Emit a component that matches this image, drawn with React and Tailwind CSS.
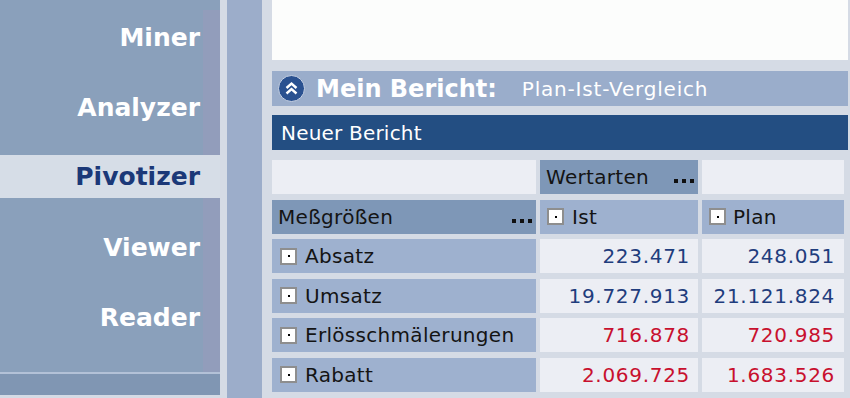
import React from "react";

const F = { fontFamily: '"DejaVu Sans", Verdana, sans-serif' };

function Box() {
  return (
    <span className="w-[17px] h-[17px] border-2 border-[#8e8e8e] bg-white flex items-center justify-center shrink-0">
      <span className="w-[2px] h-[2px] bg-black" />
    </span>
  );
}

function Dots() {
  return (
    <span className="flex gap-[4px] items-end">
      <span className="w-[4px] h-[4px] bg-[#111]" />
      <span className="w-[4px] h-[4px] bg-[#111]" />
      <span className="w-[4px] h-[4px] bg-[#111]" />
    </span>
  );
}

const rows = [
  ["Absatz", "223.471", "248.051", "text-[#1f3d7d]"],
  ["Umsatz", "19.727.913", "21.121.824", "text-[#1f3d7d]"],
  ["Erlösschmälerungen", "716.878", "720.985", "text-[#c8102e]"],
  ["Rabatt", "2.069.725", "1.683.526", "text-[#c8102e]"],
];

function SideItem({ label }) {
  return (
    <div className="h-[28px] flex items-center justify-end pr-[3px] text-white font-bold text-[25px] leading-none">
      {label}
    </div>
  );
}

export default function App() {
  return (
    <div
      className="w-[850px] h-[398px] bg-[#d5dbe5] flex overflow-hidden"
      style={F}
    >
      {/* Sidebar */}
      <div className="w-[220px] h-full flex flex-col">
        <div className="h-[10px] bg-[#8aa0bb]" />
        <div className="h-[145px] flex">
          <div className="w-[203px] bg-[#8aa0bb] flex flex-col pt-[13px] gap-[42px]">
            <SideItem label="Miner" />
            <SideItem label="Analyzer" />
          </div>
          <div className="w-[17px] bg-[#929dbb]" />
        </div>
        <div className="h-[43px] bg-[#d6dde7] flex items-center justify-end pr-[20px] text-[#1b3878] font-bold text-[25px] leading-none">
          Pivotizer
        </div>
        <div className="h-[174px] flex">
          <div className="w-[203px] bg-[#8aa0bb] flex flex-col pt-[35px] gap-[42px]">
            <SideItem label="Viewer" />
            <SideItem label="Reader" />
          </div>
          <div className="w-[17px] bg-[#929dbb]" />
        </div>
        <div className="h-[2px] bg-[#b3c1d7]" />
        <div className="h-[21px] bg-[#8096b3]" />
      </div>

      <div className="w-[7px]" />
      <div className="w-[35px] h-full bg-[#9cadca]" />
      <div className="w-[10px]" />

      {/* Main */}
      <div className="w-[576px] flex flex-col">
        <div className="h-[60px] bg-[#fcfdfc]" />
        <div className="h-[11px]" />
        <div className="h-[35px] bg-[#9aadcb] flex items-center">
          <span className="ml-[6px] w-[27px] h-[27px] rounded-full bg-[#2a5190] border border-[#c9d3e4] flex items-center justify-center">
            <svg width="15" height="15" viewBox="0 0 15 15">
              <path d="M2.5 7 L7.5 2.5 L12.5 7" fill="none" stroke="white" strokeWidth="2.4" />
              <path d="M2.5 12.5 L7.5 8 L12.5 12.5" fill="none" stroke="white" strokeWidth="2.4" />
            </svg>
          </span>
          <span className="ml-[11px] text-white font-bold text-[24px] leading-none">
            Mein Bericht:
          </span>
          <span className="ml-[25px] text-white text-[20px] tracking-[0.8px] leading-none">
            Plan-Ist-Vergleich
          </span>
        </div>
        <div className="h-[9px]" />
        <div className="h-[35px] bg-[#234e82] flex items-center pl-[9px] text-white text-[20px] tracking-[0.2px] leading-none">
          Neuer Bericht
        </div>
        <div className="h-[10px]" />
        <div className="grid grid-cols-[264px_158px_142px] gap-x-[4px] gap-y-[5.6px] auto-rows-[34px] text-[20px] tracking-[0.3px] leading-none text-[#141414]">
          <div className="bg-[#eceef4]" />
          <div className="bg-[#7e97b7] flex items-center justify-between pl-[6px] pr-[4px]">
            <span>Wertarten</span>
            <span className="pt-[8px]"><Dots /></span>
          </div>
          <div className="bg-[#eceef4]" />

          <div className="bg-[#7e97b7] flex items-center justify-between pl-[6px] pr-[4px]">
            <span>Meßgrößen</span>
            <span className="pt-[8px]"><Dots /></span>
          </div>
          <div className="bg-[#9eb1cf] flex items-center pl-[7px] gap-[8px]">
            <Box />
            <span>Ist</span>
          </div>
          <div className="bg-[#9eb1cf] flex items-center pl-[7px] gap-[7px]">
            <Box />
            <span>Plan</span>
          </div>

          {rows.map(([l, a, b, c]) => (
            <React.Fragment key={l}>
              <div className="bg-[#9eb1cf] flex items-center pl-[8px] gap-[8px]">
                <Box />
                <span>{l}</span>
              </div>
              <div className={"bg-[#eceef4] flex items-center justify-end pr-[8px] tracking-[0.7px] " + c}>
                {a}
              </div>
              <div className={"bg-[#eceef4] flex items-center justify-end pr-[9px] tracking-[0.7px] " + c}>
                {b}
              </div>
            </React.Fragment>
          ))}
        </div>
      </div>
    </div>
  );
}
